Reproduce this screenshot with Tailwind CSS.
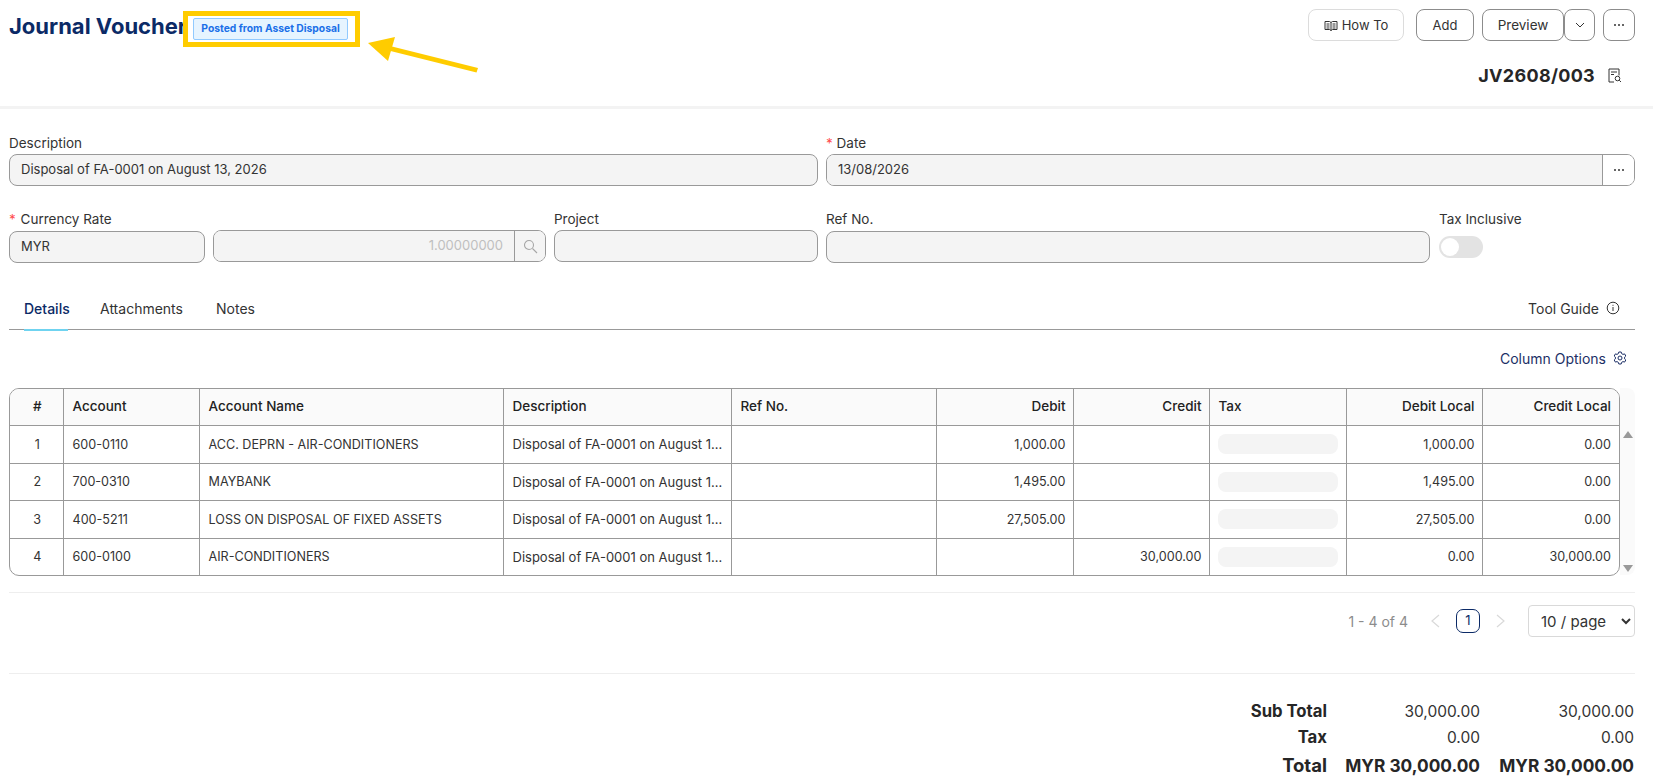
<!DOCTYPE html>
<html lang="en">
<head>
<meta charset="utf-8">
<script src="https://cdn.jsdelivr.net/npm/@tailwindcss/browser@4"></script>
<title>Journal Voucher</title>
</head>
<body class="relative w-[1653px] h-[778px] overflow-hidden bg-white font-['Inter',sans-serif] text-[13px] text-[#333]">

<header class="flex justify-between h-[109px] border-b-[3px] border-[#f3f3f3] pr-[18px]">
  <div class="flex items-start pl-[9px] pt-[11px]">
    <h1 class="w-[174px] h-[30px] overflow-hidden whitespace-nowrap text-[22px] leading-[30px] font-bold text-[#0b2a66]">Journal Voucher</h1>
    <div class="flex items-center h-[36px] border-[5px] border-[#ffcc00] pl-[5px] pr-[7px]">
      <span class="flex items-center h-[22px] w-[155px] justify-center rounded-[2px] border border-[#91caff] bg-[#e6f4ff] text-[10.300px] font-bold text-[#1a6fe8] whitespace-nowrap">Posted from Asset Disposal</span>
    </div>
  </div>
  <div class="flex flex-col items-end pt-[9px]">
    <div class="flex items-start">
      <button class="flex items-center justify-center gap-[4px] w-[96px] h-[32px] rounded-[8px] border border-[#dcdcdc] text-[13px] mr-[12px] pt-px">
        <svg width="14" height="14" viewBox="0 0 14 14" fill="none" stroke="#333" stroke-width="1"><path d="M1 2.500h4.500L7 3.500l1.500-1H13v8H8.500L7 11.500 5.500 10.500H1z"/><path d="M7 3.500v8M2.500 5h3M2.500 7h3M2.500 9h3M8.500 5h3M8.500 7h3M8.500 9h3"/></svg>
        How To
      </button>
      <button class="w-[58px] h-[32px] rounded-[8px] border border-[#8c8c8c] text-[13px] mr-[8px] pt-px">Add</button>
      <button class="w-[82px] h-[32px] rounded-[8px] border border-[#8c8c8c] text-[13.500px] pt-px">Preview</button>
      <button class="flex items-center justify-center w-[31px] h-[32px] rounded-[8px] border border-[#8c8c8c] mr-[8px]">
        <svg width="10" height="6" viewBox="0 0 10 6" fill="none" stroke="#333" stroke-width="1"><path d="M1 1l4 4 4-4"/></svg>
      </button>
      <button class="flex items-center justify-center w-[32px] h-[32px] rounded-[8px] border border-[#8c8c8c]">
        <svg width="12" height="4" viewBox="0 0 12 4" fill="#333"><circle cx="2" cy="2" r="1"/><circle cx="6" cy="2" r="1"/><circle cx="10" cy="2" r="1"/></svg>
      </button>
    </div>
    <div class="flex items-center h-[30px] mt-[19px] pr-[13px]">
      <span class="text-[18px] font-bold tracking-[0.3px] text-[#262626]">JV2608/003</span>
      <svg class="ml-[13px]" width="14" height="15" viewBox="0 0 14 15" fill="none" stroke="#333" stroke-width="1"><path d="M6 14H1V1h10v6.500"/><path d="M3 4h6M3 6.500h3"/><circle cx="9.500" cy="10.500" r="2.300"/><path d="M11.200 12.200l1.800 1.800"/></svg>
    </div>
  </div>
</header>

<main class="pl-[9px] pr-[18px]">
  <section class="pt-[23px]">
    <div class="flex gap-[8px]">
      <div class="w-[809px]">
        <div class="h-[22px] leading-[22px] text-[13.500px]">Description</div>
        <div class="flex items-center h-[32px] rounded-[8px] border border-[#999] bg-[#f4f4f4] px-[11px]">Disposal of FA-0001 on August 13, 2026</div>
      </div>
      <div class="w-[809px]">
        <div class="h-[22px] leading-[22px] text-[13.500px]"><span class="text-[#ff4d4f]">*</span> Date</div>
        <div class="flex h-[32px] rounded-[8px] border border-[#999] overflow-hidden">
          <div class="flex flex-1 items-center bg-[#f4f4f4] px-[11px]">13/08/2026</div>
          <div class="flex w-[32px] items-center justify-center border-l border-[#999] bg-white">
            <svg width="12" height="4" viewBox="0 0 12 4" fill="#333"><circle cx="2" cy="2" r="1"/><circle cx="6" cy="2" r="1"/><circle cx="10" cy="2" r="1"/></svg>
          </div>
        </div>
      </div>
    </div>

    <div class="flex mt-[23px]">
      <div class="w-[196px] mr-[8px]">
        <div class="h-[22px] leading-[20px] text-[13.500px]"><span class="text-[#ff4d4f] mr-px">*</span> Currency Rate</div>
        <div class="flex items-center h-[32px] rounded-[8px] border border-[#999] bg-[#f4f4f4] px-[11px]">MYR</div>
      </div>
      <div class="w-[333px] mr-[8px] pt-[21px]">
        <div class="flex h-[32px] rounded-[8px] border border-[#999] overflow-hidden">
          <div class="flex flex-1 items-center justify-end bg-[#f4f4f4] px-[11px] text-[#bfbfbf]">1.00000000</div>
          <div class="flex w-[31px] items-center justify-center border-l border-[#999] bg-[#f4f4f4]">
            <svg width="15" height="15" viewBox="0 0 15 15" fill="none" stroke="#a6a6a6" stroke-width="1.100"><circle cx="6" cy="6" r="4.500"/><path d="M9.500 9.500l4.500 4.500"/></svg>
          </div>
        </div>
      </div>
      <div class="w-[264px] mr-[8px]">
        <div class="h-[21px] leading-[20px] text-[13.500px]">Project</div>
        <div class="h-[32px] rounded-[8px] border border-[#999] bg-[#f4f4f4]"></div>
      </div>
      <div class="w-[604px] mr-[9px]">
        <div class="h-[22px] leading-[20px] text-[13.500px]">Ref No.</div>
        <div class="h-[32px] rounded-[8px] border border-[#999] bg-[#f4f4f4]"></div>
      </div>
      <div>
        <div class="h-[27px] leading-[20px] whitespace-nowrap text-[13.500px]">Tax Inclusive</div>
        <div class="flex items-center w-[44px] h-[22px] rounded-full bg-[#e3e3e3] px-[2px]">
          <span class="w-[18px] h-[18px] rounded-full bg-white"></span>
        </div>
      </div>
    </div>
  </section>

  <nav class="flex items-center h-[45px] mt-[22px] border-b border-[#999] relative text-[14px]">
    <div class="relative flex items-center h-[45px] pt-[2px] ml-[15px] text-[#0b2a66] font-medium w-[44px]">Details<span class="absolute left-0 right-0 bottom-[-1px] h-[2px] bg-[#6fd3f0]"></span></div>
    <div class="ml-[32px] w-[84px] pt-[2px]">Attachments</div>
    <div class="ml-[32px] pt-[2px]">Notes</div>
    <div class="ml-auto flex items-center gap-[7px] pr-[15px] pt-[2px]">
      <span>Tool Guide</span>
      <svg width="14" height="14" viewBox="0 0 14 14" fill="none" stroke="#333" stroke-width="1"><circle cx="7" cy="7" r="5.800"/><path d="M7 6v4M7 3.800v1"/></svg>
    </div>
  </nav>

  <div class="flex items-center justify-end gap-[7px] h-[55px] pt-[1px] mb-[3px] pr-[8px] text-[14px] text-[#1c2f66]">
    <span>Column Options</span>
    <svg width="14" height="14" viewBox="0 0 14 14" fill="none" stroke="#1c2f66" stroke-width="1"><path d="M5.800 1h2.400l.4 1.600 1.400.8 1.600-.5 1.200 2.100-1.200 1.100v1.800l1.200 1.100-1.200 2.100-1.600-.5-1.400.8-.4 1.600H5.800l-.4-1.600-1.400-.8-1.600.5-1.200-2.100 1.200-1.100V6.100L1.200 5l1.200-2.100 1.600.5 1.400-.8z"/><circle cx="7" cy="7" r="2"/></svg>
  </div>

  <div class="flex">
    <div class="w-[1611px] h-[188px] rounded-[10px] border border-[#999] overflow-hidden">
      <table class="w-full table-fixed border-collapse text-[12.600px]">
        <colgroup>
          <col class="w-[53px]"><col class="w-[136px]"><col class="w-[304px]"><col class="w-[228px]"><col class="w-[205px]"><col class="w-[137px]"><col class="w-[136px]"><col class="w-[137px]"><col class="w-[136px]"><col class="w-[137px]">
        </colgroup>
        <thead>
          <tr class="h-[36px] bg-[#fafafa] text-[#222] text-[13.500px] [&>th]:font-medium [&>th]:border-b [&>th]:border-r [&>th]:border-[#999] [&>th]:pl-[9px] [&>th]:pr-[7px] [&>th]:pb-[2px] [&>th:last-child]:border-r-0 [&>th:last-child]:pr-[8px]">
            <th class="text-center">#</th><th class="text-left">Account</th><th class="text-left">Account Name</th><th class="text-left">Description</th><th class="text-left">Ref No.</th><th class="text-right">Debit</th><th class="text-right">Credit</th><th class="text-left">Tax</th><th class="text-right">Debit Local</th><th class="text-right">Credit Local</th>
          </tr>
        </thead>
        <tbody class="[&_td]:border-r [&_td]:border-b [&_td]:border-[#999] [&_td]:pl-[9px] [&_td]:pr-[7px] [&_td]:pt-[2px] [&_td:last-child]:border-r-0 [&_td:last-child]:pr-[8px] [&_tr:last-child_td]:border-b-0">
          <tr class="h-[38px]"><td class="text-center">1</td><td>600-0110</td><td>ACC. DEPRN - AIR-CONDITIONERS</td><td class="truncate text-[13px]">Disposal of FA-0001 on August 13, 2026</td><td></td><td class="text-right">1,000.00</td><td></td><td><div class="h-[20px] w-[120px] -ml-px -mt-[2px] rounded-[8px] bg-[#f4f4f4]"></div></td><td class="text-right">1,000.00</td><td class="text-right">0.00</td></tr>
          <tr class="h-[37px]"><td class="text-center">2</td><td>700-0310</td><td>MAYBANK</td><td class="truncate text-[13px]">Disposal of FA-0001 on August 13, 2026</td><td></td><td class="text-right">1,495.00</td><td></td><td><div class="h-[20px] w-[120px] -ml-px -mt-[2px] rounded-[8px] bg-[#f4f4f4]"></div></td><td class="text-right">1,495.00</td><td class="text-right">0.00</td></tr>
          <tr class="h-[38px]"><td class="text-center">3</td><td>400-5211</td><td>LOSS ON DISPOSAL OF FIXED ASSETS</td><td class="truncate text-[13px]">Disposal of FA-0001 on August 13, 2026</td><td></td><td class="text-right">27,505.00</td><td></td><td><div class="h-[20px] w-[120px] -ml-px -mt-[2px] rounded-[8px] bg-[#f4f4f4]"></div></td><td class="text-right">27,505.00</td><td class="text-right">0.00</td></tr>
          <tr class="h-[37px]"><td class="text-center">4</td><td>600-0100</td><td>AIR-CONDITIONERS</td><td class="truncate text-[13px]">Disposal of FA-0001 on August 13, 2026</td><td></td><td></td><td class="text-right">30,000.00</td><td><div class="h-[20px] w-[120px] -ml-px -mt-[2px] rounded-[8px] bg-[#f4f4f4]"></div></td><td class="text-right">0.00</td><td class="text-right">30,000.00</td></tr>
        </tbody>
      </table>
    </div>
    <div class="flex flex-col items-center justify-between w-[15px] h-[187px] bg-[#fafafa] rounded-r-[8px] pt-[43px] pb-[3px]">
      <svg width="10" height="7" viewBox="0 0 10 7" fill="#999"><path d="M5 0l5 7H0z"/></svg>
      <svg width="10" height="7" viewBox="0 0 10 7" fill="#999"><path d="M5 7L0 0h10z"/></svg>
    </div>
  </div>

  <div class="mt-[16px] border-t border-[#eeeeee] flex items-center justify-end h-[82px] border-b pb-[24px]">
    <span class="text-[#8c8c8c] text-[14px] mr-[22px]">1 - 4 of 4</span>
    <svg class="mr-[15px]" width="11" height="14" viewBox="0 0 11 14" fill="none" stroke="#d9d9d9" stroke-width="1.200"><path d="M9 1L2 7l7 6"/></svg>
    <span class="flex items-center justify-center w-[24px] h-[24px] rounded-[7px] border border-[#0b2a66] text-[#0b2a66] mr-[15px]">1</span>
    <svg class="mr-[22px]" width="11" height="14" viewBox="0 0 11 14" fill="none" stroke="#d9d9d9" stroke-width="1.200"><path d="M2 1l7 6-7 6"/></svg>
    <select class="w-[107px] h-[32px] rounded-[4px] border border-[#d9d9d9] bg-white pl-[8px] text-[15px] text-[#333]"><option>10 / page</option></select>
  </div>

  <div class="pt-[25px] pr-[1px] text-[15.500px]">
    <div class="flex justify-end items-center h-[26px]"><span class="font-bold text-[16.700px] text-[#262626] w-[160px] text-right">Sub Total</span><span class="w-[153px] text-right">30,000.00</span><span class="w-[154px] text-right">30,000.00</span></div>
    <div class="flex justify-end items-center h-[26px]"><span class="font-bold text-[16.700px] text-[#262626] w-[160px] text-right">Tax</span><span class="w-[153px] text-right">0.00</span><span class="w-[154px] text-right">0.00</span></div>
    <div class="flex justify-end items-center h-[30px] text-[17.300px] font-bold text-[#262626]"><span class="w-[160px] text-right text-[18.500px]">Total</span><span class="w-[153px] text-right">MYR 30,000.00</span><span class="w-[154px] text-right">MYR 30,000.00</span></div>
  </div>
</main>

<svg class="absolute left-[360px] top-[30px]" width="125" height="50" viewBox="360 30 125 50" fill="#ffcc00">
  <path d="M368 43L395 37L388 61Z"/>
  <path d="M390 46L478 68L476.500 72.500L388.500 50.500Z"/>
</svg>
</body>
</html>
